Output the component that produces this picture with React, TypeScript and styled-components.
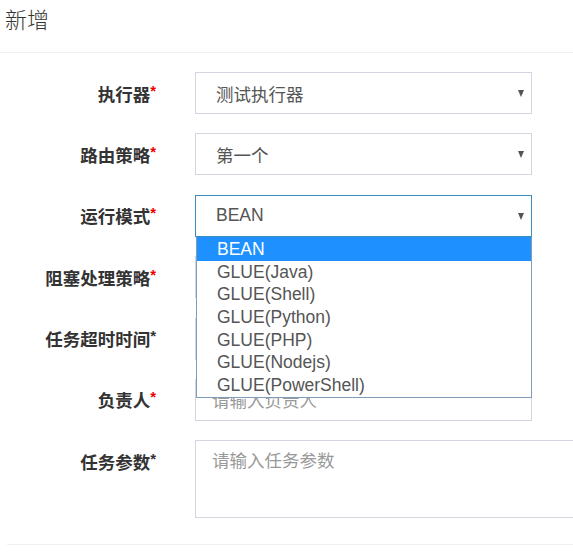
import styled, { createGlobalStyle } from 'styled-components';

const GlobalStyle = createGlobalStyle`
    html, body {
        margin: 0;
        padding: 0;
        background: #fff;
        overflow: hidden;
    }
    body {
        font-family: "Liberation Sans", "Noto Sans CJK SC", Arial, sans-serif;
        color: #333;
    }
`;

const Page = styled.div`
    width: 573px;
    height: 555px;
    overflow: hidden;
`;

const Header = styled.div`
    height: 52px;
    padding-left: 5px;
    border-bottom: 1px solid #f0f0f0;
    font-family: "Noto Sans CJK SC", sans-serif;
    font-size: 22px;
    font-weight: 300;
    line-height: 36px;
    color: #333;
`;

const Form = styled.div`
    display: flex;
    flex-direction: column;
    gap: 19.4px;
    padding-top: 19px;
    padding-bottom: 26px;
    border-bottom: 1px solid #f0f0f0;
    margin-left: 7px;
`;

const Row = styled.div`
    display: grid;
    grid-template-columns: 149px 1fr;
    column-gap: 39px;
    align-items: start;
`;

const Label = styled.label`
    height: 42px;
    display: flex;
    align-items: center;
    justify-content: flex-end;
    font-family: "Noto Sans CJK SC", sans-serif;
    font-weight: 700;
    font-size: 17.5px;
    color: #333;
    white-space: nowrap;
`;

const Star = styled.span<{ $red?: boolean }>`
    color: ${p => (p.$red ? '#e00' : '#333')};
    font-family: "Liberation Sans", sans-serif;
    font-size: 15px;
    font-weight: 700;
    line-height: 1;
    margin-top: -6px;
`;

const SelectWrap = styled.div`
    position: relative;
    width: 337px;
`;

const SelectBox = styled.div<{ $focus?: boolean }>`
    height: 42px;
    box-sizing: border-box;
    border: 1px solid ${p => (p.$focus ? '#3c8dbc' : '#d2d6de')};
    padding-left: 20px;
    display: flex;
    align-items: center;
    font-family: "Liberation Sans", "Noto Sans CJK SC", sans-serif;
    font-size: 17.5px;
    color: #555;
    background: #fff;
`;

const Caret = styled.span`
    position: absolute;
    right: 8px;
    top: 18px;
    width: 0;
    height: 0;
    border-left: 3.5px solid transparent;
    border-right: 3.5px solid transparent;
    border-top: 7px solid #555;
`;

const Dropdown = styled.ul`
    position: absolute;
    top: 42px;
    left: 1px;
    right: 0;
    margin: 0;
    padding: 0 0 1px;
    list-style: none;
    background: #fff;
    border: 1px solid #7f9db9;
    border-top: none;
    z-index: 2;
`;

const Option = styled.li<{ $active?: boolean }>`
    height: 22.6px;
    line-height: 22.6px;
    padding-left: 20px;
    font-family: "Liberation Sans", sans-serif;
    font-size: 17.5px;
    color: ${p => (p.$active ? '#fff' : '#555')};
    background: ${p => (p.$active ? '#1e90ff' : 'transparent')};
    &:first-child {
        height: 24px;
        line-height: 24px;
    }
`;

const Input = styled.div`
    width: 337px;
    height: 42px;
    box-sizing: border-box;
    border: 1px solid #d2d6de;
    padding-left: 16px;
    display: flex;
    align-items: center;
    font-family: "Noto Sans CJK SC", sans-serif;
    font-size: 17.5px;
    color: #999;
`;

const TextArea = styled.div`
    width: 420px;
    height: 78px;
    box-sizing: border-box;
    border: 1px solid #d2d6de;
    padding: 7px 16px;
    font-family: "Noto Sans CJK SC", sans-serif;
    font-size: 17.5px;
    line-height: 24px;
    color: #999;
`;

const modes = [
    'BEAN',
    'GLUE(Java)',
    'GLUE(Shell)',
    'GLUE(Python)',
    'GLUE(PHP)',
    'GLUE(Nodejs)',
    'GLUE(PowerShell)',
];

function Select({ value, focus, open }: { value?: string; focus?: boolean; open?: boolean }) {
    return (
        <SelectWrap>
            <SelectBox $focus={focus}>{value}</SelectBox>
            <Caret />
            {open && (
                <Dropdown>
                    {modes.map((m, i) => (
                        <Option key={m} $active={i === 0}>{m}</Option>
                    ))}
                </Dropdown>
            )}
        </SelectWrap>
    );
}

function App() {
    return (
        <Page>
            <GlobalStyle />
            <Header>新增</Header>
            <Form>
                <Row>
                    <Label>执行器<Star $red>*</Star></Label>
                    <Select value="测试执行器" />
                </Row>
                <Row>
                    <Label>路由策略<Star $red>*</Star></Label>
                    <Select value="第一个" />
                </Row>
                <Row>
                    <Label>运行模式<Star $red>*</Star></Label>
                    <Select value="BEAN" focus open />
                </Row>
                <Row>
                    <Label>阻塞处理策略<Star $red>*</Star></Label>
                    {/* hidden behind the open list */}
                    <Select />
                </Row>
                <Row>
                    <Label>任务超时时间<Star>*</Star></Label>
                    <Input />
                </Row>
                <Row>
                    <Label>负责人<Star $red>*</Star></Label>
                    <Input>请输入负责人</Input>
                </Row>
                <Row>
                    <Label>任务参数<Star>*</Star></Label>
                    <TextArea>请输入任务参数</TextArea>
                </Row>
            </Form>
        </Page>
    );
}

export default App;
